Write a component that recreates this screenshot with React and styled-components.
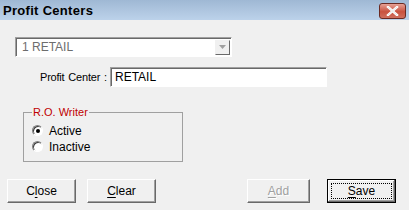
import React from "react";
import styled, { createGlobalStyle } from "styled-components";

const Global = createGlobalStyle`
  html, body { margin: 0; padding: 0; background: #f0f0f0; }
  body { font-family: "Liberation Sans", Arial, sans-serif; font-size: 11px; color: #000; }
`;

const Window = styled.div`
  width: 409px;
  height: 210px;
  background: #f0f0f0;
  display: flex;
  flex-direction: column;
  overflow: hidden;
`;

const TitleBar = styled.div`
  height: 20px;
  display: flex;
  align-items: center;
  justify-content: space-between;
  padding: 0 3px 0 3px;
  background: linear-gradient(#9fb8d4, #bcd2ea);
`;

const Title = styled.div`
  font-weight: bold;
  font-size: 13px;
  color: #000;
  letter-spacing: 0.3px;
`;

const CloseX = styled.div`
  width: 25px;
  height: 14px;
  margin-top: 1px;
  border: 1px solid #6b2a22;
  border-radius: 3px;
  background: linear-gradient(#e6a196, #c9523f 55%, #d0705f);
  display: flex;
  align-items: center;
  justify-content: center;
`;

const Body = styled.div`
  display: flex;
  flex-direction: column;
  padding: 17px 0 0 15px;
`;

const Combo = styled.div`
  width: 217px;
  height: 20px;
  box-sizing: border-box;
  border: 1px solid;
  border-color: #a0a0a0 #fff #fff #a0a0a0;
  box-shadow: inset 1px 1px 0 #696969;
  background: #fff;
  display: flex;
  align-items: center;
  justify-content: space-between;
  padding: 0 1px 0 6px;
  color: #6d6d6d;
  font-size: 12px;
`;

const DropBtn = styled.div`
  width: 15px;
  height: 15px;
  box-sizing: border-box;
  border: 1px solid;
  border-color: #f0f0f0 #696969 #696969 #f0f0f0;
  background: #f0f0f0;
  display: flex;
  align-items: center;
  justify-content: center;
`;

const FieldRow = styled.div`
  display: flex;
  align-items: center;
  margin-top: 10px;
`;

const Label = styled.label`
  width: 95px;
  padding-left: 25px;
  box-sizing: border-box;
  font-size: 11px;
  letter-spacing: -0.2px;
  word-spacing: 1px;
  color: #000;
  white-space: nowrap;
`;

const Input = styled.div`
  width: 217px;
  height: 20px;
  box-sizing: border-box;
  border: 1px solid;
  border-color: #a0a0a0 #fff #fff #a0a0a0;
  box-shadow: inset 1px 1px 0 #696969;
  background: #fff;
  display: flex;
  align-items: center;
  padding-left: 4px;
  font-size: 12px;
`;

const Group = styled.fieldset`
  margin: 19px 0 0 8px;
  width: 160px;
  height: 56px;
  box-sizing: border-box;
  border: 1px solid #a0a0a0;
  padding: 5px 0 0 8px;
  display: flex;
  flex-direction: column;
  gap: 1px;
`;

const Legend = styled.legend`
  color: #c00000;
  font-size: 11px;
  padding: 0 1px;
  margin-left: 0;
`;

const Radio = styled.div`
  display: flex;
  align-items: center;
  gap: 6px;
  height: 15px;
  font-size: 12px;
`;

const Dot = styled.span`
  width: 11px;
  height: 11px;
  box-sizing: border-box;
  border-radius: 50%;
  border: 1px solid;
  border-color: #808080 #fff #fff #808080;
  box-shadow: inset 1px 1px 0 #404040;
  background: #fff;
  display: flex;
  align-items: center;
  justify-content: center;
  &::after {
    content: "";
    width: 4px;
    height: 4px;
    border-radius: 50%;
    background: ${(p) => (p.checked ? "#000" : "transparent")};
  }
`;

const ButtonRow = styled.div`
  display: flex;
  align-items: center;
  margin-top: 17px;
  padding-left: 7px;
`;

const Button = styled.div`
  width: ${(p) => p.w || 69}px;
  height: 24px;
  margin-left: ${(p) => p.ml || 0}px;
  box-sizing: border-box;
  background: #f0f0f0;
  border: 1px solid;
  border-color: ${(p) => (p.def ? "#000" : "#fff #696969 #696969 #fff")};
  box-shadow: ${(p) =>
    p.def
      ? "inset -1px -1px 0 #696969, inset 1px 1px 0 #fff, inset -2px -2px 0 #a0a0a0"
      : "inset -1px -1px 0 #a0a0a0"};
  display: flex;
  align-items: center;
  justify-content: center;
  font-size: 12px;
  color: ${(p) => (p.disabled ? "#a0a0a0" : "#000")};
  text-shadow: ${(p) => (p.disabled ? "1px 1px 0 #fff" : "none")};
  position: relative;
  u { text-decoration: underline; text-underline-offset: 2px; }
`;

const Focus = styled.span`
  position: absolute;
  inset: 3px;
  border: 1px dotted #000;
`;

export default function App() {
  return (
    <Window>
      <Global />
      <TitleBar>
        <Title>Profit Centers</Title>
        <CloseX>
          <svg width="13" height="10" viewBox="0 0 13 10">
            <path d="M2 1 L11 9 M11 1 L2 9" stroke="#fff" strokeWidth="2.4" strokeLinecap="square" />
            <path d="M2 1 L11 9 M11 1 L2 9" stroke="#e8e8e8" strokeWidth="1" />
          </svg>
        </CloseX>
      </TitleBar>
      <Body>
        <Combo>
          1 RETAIL
          <DropBtn>
            <svg width="7" height="4" viewBox="0 0 7 4">
              <path d="M0 0 H7 L3.5 4 Z" fill="#a0a0a0" />
            </svg>
          </DropBtn>
        </Combo>
        <FieldRow>
          <Label>Profit Center :</Label>
          <Input>RETAIL</Input>
        </FieldRow>
        <Group>
          <Legend>R.O. Writer</Legend>
          <Radio>
            <Dot checked />
            Active
          </Radio>
          <Radio>
            <Dot />
            Inactive
          </Radio>
        </Group>
      </Body>
      <ButtonRow>
        <Button>
          <span>C<u>l</u>ose</span>
        </Button>
        <Button ml={11}>
          <span><u>C</u>lear</span>
        </Button>
        <Button w={63} ml={91} disabled>
          <span><u>A</u>dd</span>
        </Button>
        <Button ml={17} def>
          <Focus />
          <span><u>S</u>ave</span>
        </Button>
      </ButtonRow>
    </Window>
  );
}
